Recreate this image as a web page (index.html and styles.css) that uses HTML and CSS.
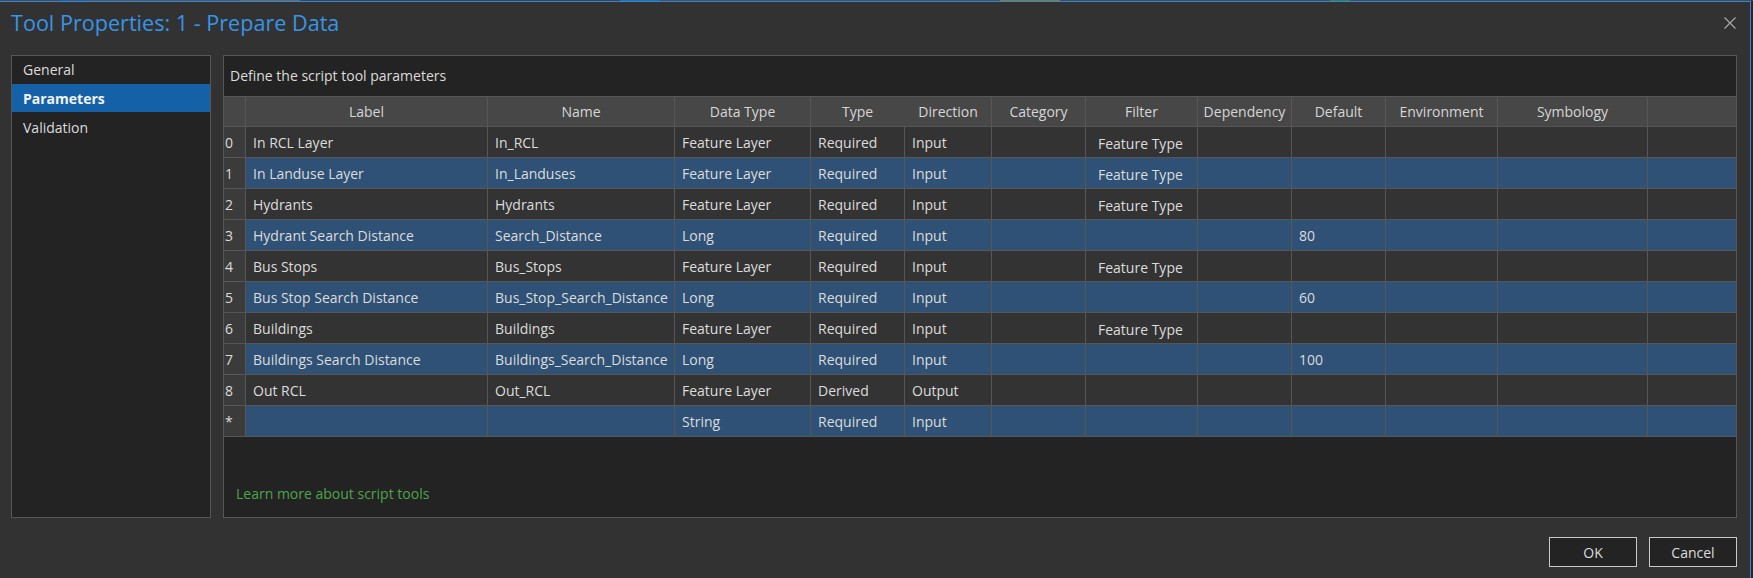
FILE: index.html
```html
<!DOCTYPE html>
<html lang="en">
<head>
<meta charset="utf-8">
<title>Tool Properties: 1 - Prepare Data</title>
<link rel="stylesheet" href="styles.css">
</head>
<body>
<div class="dialog">
  <header class="titlebar">
    <h1 class="title">Tool Properties: 1 - Prepare Data</h1>
    <button class="close" aria-label="Close">
      <svg width="12" height="12" viewBox="0 0 12 12"><path d="M0.5 0.5 L11.5 11.5 M11.5 0.5 L0.5 11.5" stroke="#a8a8a8" stroke-width="1.2" fill="none"/></svg>
    </button>
  </header>
  <div class="content">
    <nav class="nav">
      <div class="nav-item">General</div>
      <div class="nav-item active">Parameters</div>
      <div class="nav-item">Validation</div>
    </nav>
    <section class="panel">
      <div class="panel-head">Define the script tool parameters</div>
      <div class="grid">
        <div class="row head">
          <div class="c idx"></div><div class="c">Label</div><div class="c">Name</div><div class="c">Data Type</div><div class="c noline">Type</div><div class="c">Direction</div><div class="c">Category</div><div class="c">Filter</div><div class="c">Dependency</div><div class="c">Default</div><div class="c">Environment</div><div class="c">Symbology</div><div class="c last"></div>
        </div>
        <div class="row">
          <div class="c idx">0</div><div class="c">In RCL Layer</div><div class="c">In_RCL</div><div class="c">Feature Layer</div><div class="c">Required</div><div class="c">Input</div><div class="c"></div><div class="c filter">Feature Type</div><div class="c"></div><div class="c"></div><div class="c"></div><div class="c"></div><div class="c last"></div>
        </div>
        <div class="row sel">
          <div class="c idx">1</div><div class="c">In Landuse Layer</div><div class="c">In_Landuses</div><div class="c">Feature Layer</div><div class="c">Required</div><div class="c">Input</div><div class="c"></div><div class="c filter">Feature Type</div><div class="c"></div><div class="c"></div><div class="c"></div><div class="c"></div><div class="c last"></div>
        </div>
        <div class="row">
          <div class="c idx">2</div><div class="c">Hydrants</div><div class="c">Hydrants</div><div class="c">Feature Layer</div><div class="c">Required</div><div class="c">Input</div><div class="c"></div><div class="c filter">Feature Type</div><div class="c"></div><div class="c"></div><div class="c"></div><div class="c"></div><div class="c last"></div>
        </div>
        <div class="row sel">
          <div class="c idx">3</div><div class="c">Hydrant Search Distance</div><div class="c">Search_Distance</div><div class="c">Long</div><div class="c">Required</div><div class="c">Input</div><div class="c"></div><div class="c filter"></div><div class="c"></div><div class="c">80</div><div class="c"></div><div class="c"></div><div class="c last"></div>
        </div>
        <div class="row">
          <div class="c idx">4</div><div class="c">Bus Stops</div><div class="c">Bus_Stops</div><div class="c">Feature Layer</div><div class="c">Required</div><div class="c">Input</div><div class="c"></div><div class="c filter">Feature Type</div><div class="c"></div><div class="c"></div><div class="c"></div><div class="c"></div><div class="c last"></div>
        </div>
        <div class="row sel">
          <div class="c idx">5</div><div class="c">Bus Stop Search Distance</div><div class="c">Bus_Stop_Search_Distance</div><div class="c">Long</div><div class="c">Required</div><div class="c">Input</div><div class="c"></div><div class="c filter"></div><div class="c"></div><div class="c">60</div><div class="c"></div><div class="c"></div><div class="c last"></div>
        </div>
        <div class="row">
          <div class="c idx">6</div><div class="c">Buildings</div><div class="c">Buildings</div><div class="c">Feature Layer</div><div class="c">Required</div><div class="c">Input</div><div class="c"></div><div class="c filter">Feature Type</div><div class="c"></div><div class="c"></div><div class="c"></div><div class="c"></div><div class="c last"></div>
        </div>
        <div class="row sel">
          <div class="c idx">7</div><div class="c">Buildings Search Distance</div><div class="c">Buildings_Search_Distance</div><div class="c">Long</div><div class="c">Required</div><div class="c">Input</div><div class="c"></div><div class="c filter"></div><div class="c"></div><div class="c">100</div><div class="c"></div><div class="c"></div><div class="c last"></div>
        </div>
        <div class="row">
          <div class="c idx">8</div><div class="c">Out RCL</div><div class="c">Out_RCL</div><div class="c">Feature Layer</div><div class="c">Derived</div><div class="c">Output</div><div class="c"></div><div class="c filter"></div><div class="c"></div><div class="c"></div><div class="c"></div><div class="c"></div><div class="c last"></div>
        </div>
        <div class="row sel">
          <div class="c idx">*</div><div class="c"></div><div class="c"></div><div class="c">String</div><div class="c">Required</div><div class="c">Input</div><div class="c"></div><div class="c filter"></div><div class="c"></div><div class="c"></div><div class="c"></div><div class="c"></div><div class="c last"></div>
        </div>
      </div>
      <div class="panel-foot"><a class="learn" href="#">Learn more about script tools</a></div>
    </section>
  </div>
  <footer class="buttons">
    <button class="btn">OK</button>
    <button class="btn">Cancel</button>
  </footer>
</div>
</body>
</html>
```
FILE: styles.css
```css
* { box-sizing: border-box; }
html, body { margin: 0; padding: 0; }
body {
  background-color: #262626;
  background-image: linear-gradient(90deg, #4a4a4a 0 60px, #3b5a7a 60px 90px, #555 90px 240px, #6a6a50 240px 300px, #444 300px 620px, #2f6d9a 620px 660px, #505050 660px 1000px, #8a7a30 1000px 1060px, #4a4a4a 1060px 1330px, #3e7b3e 1330px 1350px, #4a4a4a 1350px 1753px);
  background-size: 100% 1px;
  background-repeat: no-repeat;
  padding-top: 1px;
  width: 1753px;
  height: 578px;
  overflow: hidden;
  font-family: "Open Sans", "Noto Sans", sans-serif;
  color: #dcdcdc;
}
.dialog {
  width: 1751px;
  height: 577px;
  background: #323232;
  border-top: 1px solid #2f86dc;
  border-right: 1px solid #2f86dc;
  display: flex;
  flex-direction: column;
}
.titlebar {
  height: 53px;
  display: flex;
  justify-content: space-between;
  align-items: flex-start;
  padding: 0 14px 0 11px;
}
.title {
  margin: 0;
  font-weight: 400;
  font-size: 21.6px;
  line-height: 28px;
  padding-top: 7px;
  color: #3795e6;
}
.close {
  background: none;
  border: 0;
  padding: 0;
  margin-top: 15px;
  width: 12px;
  height: 12px;
  display: flex;
}
.content {
  display: flex;
  gap: 12px;
  padding: 0 13px 0 11px;
  height: 463px;
}
.nav {
  width: 200px;
  flex: none;
  background: #232323;
  border: 1px solid #575757;
  font-size: 14px;
}
.nav-item {
  height: 28px;
  line-height: 28px;
  padding-left: 11px;
  color: #dcdcdc;
}
.nav-item.active {
  background: #1561a7;
  color: #f2f2f2;
  font-weight: 700;
  line-height: 29px;
}
.nav-item.active + .nav-item { line-height: 32px; }
.panel {
  flex: 1;
  background: #232323;
  border: 1px solid #575757;
  display: flex;
  flex-direction: column;
}
.panel-head {
  height: 40px;
  line-height: 40px;
  padding-left: 6px;
  font-size: 14px;
  color: #dcdcdc;
}
.grid {
  border-top: 1px solid #575757;
  font-size: 14px;
}
.row {
  display: grid;
  grid-template-columns: 22px 242px 187px 136px 94px 87px 94px 112px 94px 94px 112px 150px 1fr;
  height: 31px;
  background: #333333;
  border-bottom: 1px solid #565656;
}
.row.sel { background: #2e5175; }
.row.head {
  height: 30px;
  background: #474747;
}
.c {
  border-right: 1px solid #565656;
  padding-left: 7px;
  white-space: nowrap;
  overflow: hidden;
  display: flex;
  align-items: center;
}
.c.last { border-right: 0; }
.head .c {
  justify-content: center;
  padding-left: 0;
  color: #d6d6d6;
}
.head .c.noline { border-right-color: transparent; }
.c.idx {
  padding-left: 1px;
  background: #3b3b3b;
}
.head .c.idx { background: #474747; }
.c.filter {
  padding-left: 12px;
  padding-top: 2px;
}
.panel-foot {
  flex: 1;
  display: flex;
  align-items: flex-end;
  padding: 0 0 14px 12px;
}
.learn {
  color: #4da549;
  text-decoration: none;
  font-size: 14px;
}
.buttons {
  display: flex;
  justify-content: flex-end;
  gap: 12px;
  padding: 19px 13px 0 0;
}
.btn {
  width: 88px;
  height: 30px;
  background: #232323;
  border: 1px solid #c9c9c9;
  color: #dcdcdc;
  font-family: "Open Sans", "Noto Sans", sans-serif;
  font-size: 14px;
  padding: 0;
}
```
